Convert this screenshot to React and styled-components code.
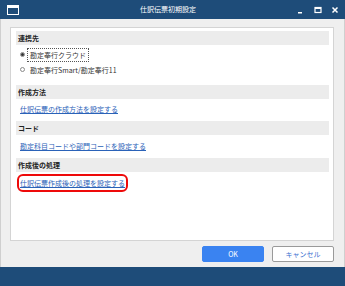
import React from "react";
import styled, { createGlobalStyle } from "styled-components";

const Global = createGlobalStyle`
  html, body { margin: 0; padding: 0; background: #ffffff; }
  body { font-family: "Noto Sans CJK JP", "Noto Sans", sans-serif; }
`;

const Window = styled.div`
  width: 345px;
  height: 286px;
  display: flex;
  flex-direction: column;
  background: #efefef;
  overflow: hidden;
`;

const TitleBar = styled.div`
  height: 19px;
  flex: none;
  background: #1e4c79;
  display: flex;
  align-items: center;
  padding: 0 6px 0 7px;
  color: #fff;
`;

const TitleText = styled.div`
  flex: 1;
  text-align: center;
  font-size: 7px;
  line-height: 19px;
  padding-left: 20px;
`;

const Controls = styled.div`
  display: flex;
  align-items: center;
  gap: 9px;
`;

const Body = styled.div`
  flex: 1;
  display: flex;
  flex-direction: column;
  border-left: 1px solid #cfcfcf;
  border-right: 1px solid #cfcfcf;
  padding: 8px 10px 0 9px;
`;

const Panel = styled.div`
  flex: none;
  height: 214px;
  background: #fff;
  border: 1px solid #d4d4d4;
  padding: 3px 4px 0 5px;
  box-sizing: border-box;
`;

const Section = styled.div``;

const Header = styled.div`
  height: 14px;
  background: #ececec;
  font-size: 7px;
  font-weight: 700;
  color: #222;
  line-height: 14px;
  padding-left: 2px;
`;

const Content = styled.div`
  height: ${(p) => p.$h}px;
  padding: ${(p) => p.$pt}px 0 0 4px;
  box-sizing: border-box;
  font-size: 7px;
  line-height: 12px;
`;

const RadioRow = styled.div`
  height: 15px;
  display: flex;
  align-items: center;
  font-size: 7px;
  color: #333;
`;

const RadioDot = styled.span`
  width: 5px;
  height: 5px;
  border-radius: 50%;
  border: 1px solid #8a8a8a;
  box-sizing: border-box;
  margin-right: 2px;
  display: flex;
  align-items: center;
  justify-content: center;
  background: #fff;
  &::after {
    content: "";
    width: 3px;
    height: 3px;
    border-radius: 50%;
    background: ${(p) => (p.$on ? "#333" : "transparent")};
  }
`;

const RadioLabel = styled.span`
  padding: 1px 2px;
  border: 1px dotted ${(p) => (p.$focus ? "#555" : "transparent")};
  line-height: 10px;
`;

const Link = styled.a`
  font-size: 7px;
  line-height: 12px;
  color: #2a62b8;
  text-decoration: underline;
  display: inline-block;
  vertical-align: top;
  border-radius: 3px;
  outline: ${(p) => (p.$mark ? "2.5px solid #ee0a0a" : "none")};
  outline-offset: 1.5px;
`;

const Footer = styled.div`
  height: 26px;
  flex: none;
  display: flex;
  align-items: center;
  justify-content: flex-end;
  gap: 8px;
`;

const Button = styled.button`
  width: 62px;
  height: 16px;
  border-radius: 2px;
  font-family: inherit;
  font-size: 7px;
  padding: 0;
  background: ${(p) => (p.$primary ? "#3a83f1" : "#ffffff")};
  color: ${(p) => (p.$primary ? "#ffffff" : "#3a6fd0")};
  border: 1px solid ${(p) => (p.$primary ? "#3a83f1" : "#9a9a9a")};
`;

const BottomBar = styled.div`
  height: 19px;
  flex: none;
  background: #1e4c79;
`;

export default function App() {
  return (
    <>
      <Global />
      <Window>
        <TitleBar>
          <svg width="12" height="10" viewBox="0 0 12 10">
            <rect x="0.5" y="0.5" width="11" height="9" fill="none" stroke="#fff" />
            <rect x="0.5" y="0.5" width="11" height="2.5" fill="#fff" />
          </svg>
          <TitleText>仕訳伝票初期設定</TitleText>
          <Controls>
            <svg width="8" height="8" viewBox="0 0 8 8">
              <rect x="1" y="6" width="4" height="1.5" fill="#fff" />
            </svg>
            <svg width="8" height="8" viewBox="0 0 8 8">
              <rect x="1" y="1.5" width="6" height="5" fill="none" stroke="#fff" strokeWidth="1.2" />
              <rect x="1" y="1.5" width="6" height="1.5" fill="#fff" />
            </svg>
            <svg width="8" height="8" viewBox="0 0 8 8">
              <path d="M1.5 1.5 L6.5 6.5 M6.5 1.5 L1.5 6.5" stroke="#fff" strokeWidth="1.5" />
            </svg>
          </Controls>
        </TitleBar>
        <Body>
          <Panel>
            <Section>
              <Header>連携先</Header>
              <Content $h={40} $pt={2}>
                <RadioRow>
                  <RadioDot $on />
                  <RadioLabel $focus>勘定奉行クラウド</RadioLabel>
                </RadioRow>
                <RadioRow>
                  <RadioDot />
                  <RadioLabel>勘定奉行Smart/勘定奉行11</RadioLabel>
                </RadioRow>
              </Content>
            </Section>
            <Section>
              <Header>作成方法</Header>
              <Content $h={22} $pt={4}>
                <Link href="#">仕訳伝票の作成方法を設定する</Link>
              </Content>
            </Section>
            <Section>
              <Header>コード</Header>
              <Content $h={23} $pt={5}>
                <Link href="#">勘定科目コードや部門コードを設定する</Link>
              </Content>
            </Section>
            <Section>
              <Header>作成後の処理</Header>
              <Content $h={30} $pt={5}>
                <Link href="#" $mark>仕訳伝票作成後の処理を設定する</Link>
              </Content>
            </Section>
          </Panel>
          <Footer>
            <Button $primary>OK</Button>
            <Button>キャンセル</Button>
          </Footer>
        </Body>
        <BottomBar />
      </Window>
    </>
  );
}
